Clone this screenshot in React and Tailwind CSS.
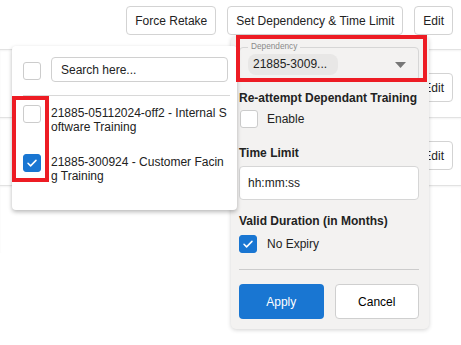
import React from 'react';

const Check = ({ checked }) => (
  <span
    className={
      'flex shrink-0 items-center justify-center w-[18px] h-[18px] rounded-[3px] border ' +
      (checked ? 'bg-[#1976d2] border-[#1976d2]' : 'bg-white border-[#cccccc]')
    }
  >
    {checked && (
      <svg width="12" height="12" viewBox="0 0 12 12" fill="none">
        <path d="M2 6.3l2.6 2.6L10 3.4" stroke="white" strokeWidth="1.5" strokeLinecap="round" strokeLinejoin="round" />
      </svg>
    )}
  </span>
);

const Btn = ({ children, className = '' }) => (
  <button className={'h-[29px] px-[8px] rounded-[4px] border border-[#d3d3d3] bg-white text-[12px] text-[#222] ' + className}>
    {children}
  </button>
);

const items = [
  { lines: ['21885-05112024-off2 - Internal S', 'oftware Training'], checked: false },
  { lines: ['21885-300924 - Customer Facin', 'g Training'], checked: true },
];

const App = () => {
  return (
    <div className="relative w-[461px] h-[345px] overflow-hidden bg-white font-['Liberation_Sans',Arial,sans-serif] text-[#222]">
      {/* page behind the popovers */}
      <div className="flex justify-end gap-[11px] pt-[6px] pr-[8px]">
        <Btn>Force Retake</Btn>
        <Btn>Set Dependency &amp; Time Limit</Btn>
        <Btn>Edit</Btn>
      </div>
      <div className="mt-[14px]">
        {[0, 1, 2].map(i => (
          <div
            key={i}
            className="h-[68px] flex justify-end items-start pt-[23px] pr-[8px] border-t border-[#e2e2e2] shadow-[inset_0_1px_2px_rgba(0,0,0,0.05)]"
          >
            {i < 2 && <Btn>Edit</Btn>}
          </div>
        ))}
      </div>

      {/* dependency settings popover */}
      <div className="absolute left-[231px] top-[36px] z-10 w-[198px] pl-[8px] pr-[10px] pt-[11px] pb-[10px] bg-[#f3f2f1] rounded-[5px] shadow-[0_1px_4px_rgba(0,0,0,0.18)]">
        <div className="relative h-[34px] flex items-center pl-[8px] border border-[#d6d6d6] rounded-[4px]">
          <span className="absolute -top-[5px] left-[8px] px-[3px] bg-[#f3f2f1] text-[8.25px] leading-none text-[#8a8a8a]">
            Dependency
          </span>
          <span className="h-[21px] w-[90px] flex items-center pl-[5px] rounded-[8px] bg-[#e8e7e6] text-[12px] text-[#222]">
            21885-3009...
          </span>
          <svg className="absolute right-[12px] top-[14px]" width="11" height="6" viewBox="0 0 11 6">
            <path d="M0 0h11L5.5 6z" fill="#777" />
          </svg>
        </div>

        <p className="mt-[10px] text-[12px] leading-[14px] font-bold">Re-attempt Dependant Training</p>
        <label className="mt-[5px] flex items-center gap-[9px] pl-[1px] text-[12px]">
          <Check checked={false} />
          Enable
        </label>

        <p className="mt-[18px] text-[12px] leading-[14px] font-bold">Time Limit</p>
        <input
          className="mt-[6px] w-full h-[34px] px-[8px] rounded-[4px] border border-[#d6d6d6] bg-white text-[12px] placeholder:text-[#222] outline-none"
          placeholder="hh:mm:ss"
        />

        <p className="mt-[14px] text-[12px] leading-[14px] font-bold">Valid Duration (in Months)</p>
        <label className="mt-[7px] flex items-center gap-[10px] text-[12px]">
          <Check checked />
          No Expiry
        </label>

        <hr className="mt-[16px] border-[#cccccc]" />

        <div className="mt-[14px] grid grid-cols-2 gap-[11px]">
          <button className="h-[35px] rounded-[4px] bg-[#1976d2] text-white text-[12px]">Apply</button>
          <button className="h-[35px] rounded-[4px] border border-[#cfcfcf] bg-white text-[12px] text-black">Cancel</button>
        </div>
      </div>
      <div className="absolute left-[236px] top-[35px] z-30 w-[191px] h-[47px] border-4 border-[#ed1c24]" />

      {/* dependency picker list */}
      <div className="absolute left-[12px] top-[46px] z-20 w-[225px] h-[164px] bg-white rounded-[4px] shadow-[0_2px_4px_rgba(0,0,0,0.28)]">
        <div className="flex items-center gap-[10px] pl-[11px] pt-[11px]">
          <span className="mt-[3px]">
            <Check checked={false} />
          </span>
          <input
            className="w-[177px] h-[25px] px-[9px] rounded-[4px] border border-[#d0d0d0] text-[12px] placeholder:text-[#222] outline-none"
            placeholder="Search here..."
          />
        </div>
        <div className="mt-[13px] ml-[11px] mr-[7px] border-t border-[#d8d8d8]" />
        <div className="pl-[11px]">
          {items.map((it, i) => (
            <div key={i} className={'flex items-start gap-[10px] ' + (i === 0 ? 'mt-[9px]' : 'mt-[20px]')}>
              <Check checked={it.checked} />
              <div className="mt-[1px] text-[12px] leading-[14px] text-[#222] whitespace-nowrap">
                {it.lines.map(l => (
                  <div key={l}>{l}</div>
                ))}
              </div>
            </div>
          ))}
        </div>
      </div>
      <div className="absolute left-[12px] top-[96px] z-30 w-[37px] h-[86px] border-4 border-[#ed1c24]" />
    </div>
  );
};

export default App;
